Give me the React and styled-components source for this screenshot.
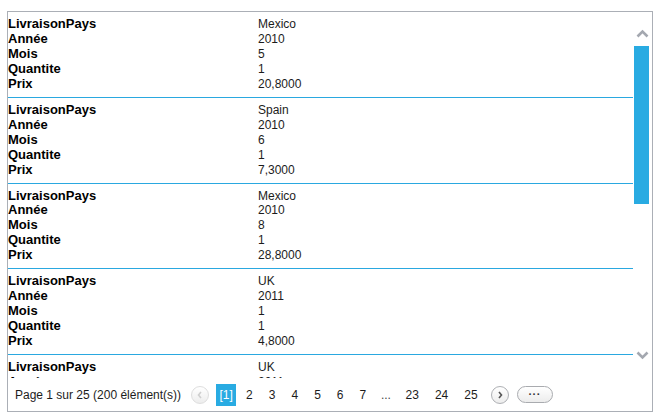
import React from "react";
import styled, { createGlobalStyle } from "styled-components";

const Global = createGlobalStyle`
  html, body { margin: 0; padding: 0; background: #fff; }
  body { font-family: "Liberation Sans", Arial, sans-serif; }
`;

const Page = styled.div`
  padding: 11px 0 0 7px;
`;

const Grid = styled.div`
  width: 646px;
  height: 401px;
  box-sizing: border-box;
  border: 1px solid #abafb6;
  display: flex;
  flex-direction: column;
  background: #fff;
`;

const Body = styled.div`
  display: flex;
  height: 366px;
`;

const List = styled.div`
  width: 625px;
  overflow: hidden;
`;

const Record = styled.div`
  display: grid;
  grid-template-columns: 250px 1fr;
  padding: 5px 0;
  border-bottom: 1px solid #2aa8e0;
  line-height: 14.95px;
`;

const Label = styled.div`
  font-size: 13px;
  font-weight: bold;
  color: #000;
  white-space: nowrap;
`;

const Value = styled.div`
  font-size: 12px;
  color: #1c1c1c;
  white-space: nowrap;
`;

const Scrollbar = styled.div`
  width: 19px;
  display: flex;
  flex-direction: column;
`;

const ArrowZone = styled.div`
  height: 34px;
  box-sizing: border-box;
  padding-top: ${(p) => p.$top}px;
  display: flex;
  justify-content: center;
  align-items: flex-start;
`;

const Track = styled.div`
  flex: 1;
`;

const Thumb = styled.div`
  width: 15px;
  height: 158px;
  margin-left: 1px;
  background: #29abe2;
`;

const Pager = styled.div`
  height: 32px;
  box-sizing: border-box;
  padding: 1px 0 0 7px;
  display: flex;
  align-items: center;
  font-size: 12px;
  color: #1c1c1c;
`;

const Info = styled.span`
  white-space: nowrap;
`;

const Circle = styled.div`
  width: 18px;
  height: 18px;
  box-sizing: border-box;
  border-radius: 50%;
  border: 1px solid ${(p) => (p.$disabled ? "#dedede" : "#aeb0b4")};
  background: linear-gradient(#ffffff, #ededed);
  display: flex;
  align-items: center;
  justify-content: center;
  margin-left: ${(p) => p.$ml}px;
`;

const Current = styled.div`
  width: 20px;
  height: 22px;
  margin-left: 7px;
  background: #29abe2;
  color: #fff;
  display: flex;
  align-items: center;
  justify-content: center;
`;

const PageLink = styled.span`
  padding: 0 8px;
  margin-left: ${(p) => p.$ml || 0}px;
  color: #1c1c1c;
`;

const Gap = styled.span`
  width: 23.33px;
  text-align: center;
  color: #444;
`;

const Pill = styled.div`
  width: 36px;
  height: 17px;
  box-sizing: border-box;
  margin-left: 8px;
  border-radius: 9px;
  border: 1px solid #a9abaf;
  background: linear-gradient(#ffffff, #ececec);
  display: flex;
  align-items: center;
  justify-content: center;
  font-size: 11px;
  font-weight: bold;
  letter-spacing: 0.5px;
  color: #333;
  line-height: 1;
`;

const records = [
  ["Mexico", "2010", "5", "1", "20,8000"],
  ["Spain", "2010", "6", "1", "7,3000"],
  ["Mexico", "2010", "8", "1", "28,8000"],
  ["UK", "2011", "1", "1", "4,8000"],
  ["UK", "2011", "2", "1", "11,2000"],
];
const labels = ["LivraisonPays", "Année", "Mois", "Quantite", "Prix"];

const Chevron = ({ dir, color }) => (
  <svg width="13" height="9" viewBox="0 0 13 9">
    <polyline
      points={dir === "up" ? "1.5,7.5 6.5,2.5 11.5,7.5" : "1.5,1.5 6.5,6.5 11.5,1.5"}
      fill="none"
      stroke={color}
      strokeWidth="2.6"
    />
  </svg>
);

const Small = ({ dir, color }) => (
  <svg width="6" height="8" viewBox="0 0 6 8">
    <polyline
      points={dir === "left" ? "4,1 1.5,4 4,7" : "2,1 4.5,4 2,7"}
      fill="none"
      stroke={color}
      strokeWidth="1.6"
    />
  </svg>
);

export default function App() {
  return (
    <>
      <Global />
      <Page>
        <Grid>
          <Body>
            <List>
              {records.map((r, i) => (
                <Record key={i}>
                  {labels.map((l, j) => (
                    <React.Fragment key={l}>
                      <Label>{l}</Label>
                      <Value>{r[j]}</Value>
                    </React.Fragment>
                  ))}
                </Record>
              ))}
            </List>
            <Scrollbar>
              <ArrowZone $top={17}>
                <Chevron dir="up" color="#a4a8b0" />
              </ArrowZone>
              <Track>
                <Thumb />
              </Track>
              <ArrowZone $top={7}>
                <Chevron dir="down" color="#a4a8b0" />
              </ArrowZone>
            </Scrollbar>
          </Body>
          <Pager>
            <Info>Page 1 sur 25 (200 élément(s))</Info>
            <Circle $disabled $ml={10}>
              <Small dir="left" color="#cfcfcf" />
            </Circle>
            <Current>[1]</Current>
            <PageLink $ml={2}>2</PageLink>
            <PageLink>3</PageLink>
            <PageLink>4</PageLink>
            <PageLink>5</PageLink>
            <PageLink>6</PageLink>
            <PageLink>7</PageLink>
            <Gap>...</Gap>
            <PageLink>23</PageLink>
            <PageLink>24</PageLink>
            <PageLink>25</PageLink>
            <Circle $ml={5}>
              <Small dir="right" color="#555" />
            </Circle>
            <Pill>···</Pill>
          </Pager>
        </Grid>
      </Page>
    </>
  );
}
